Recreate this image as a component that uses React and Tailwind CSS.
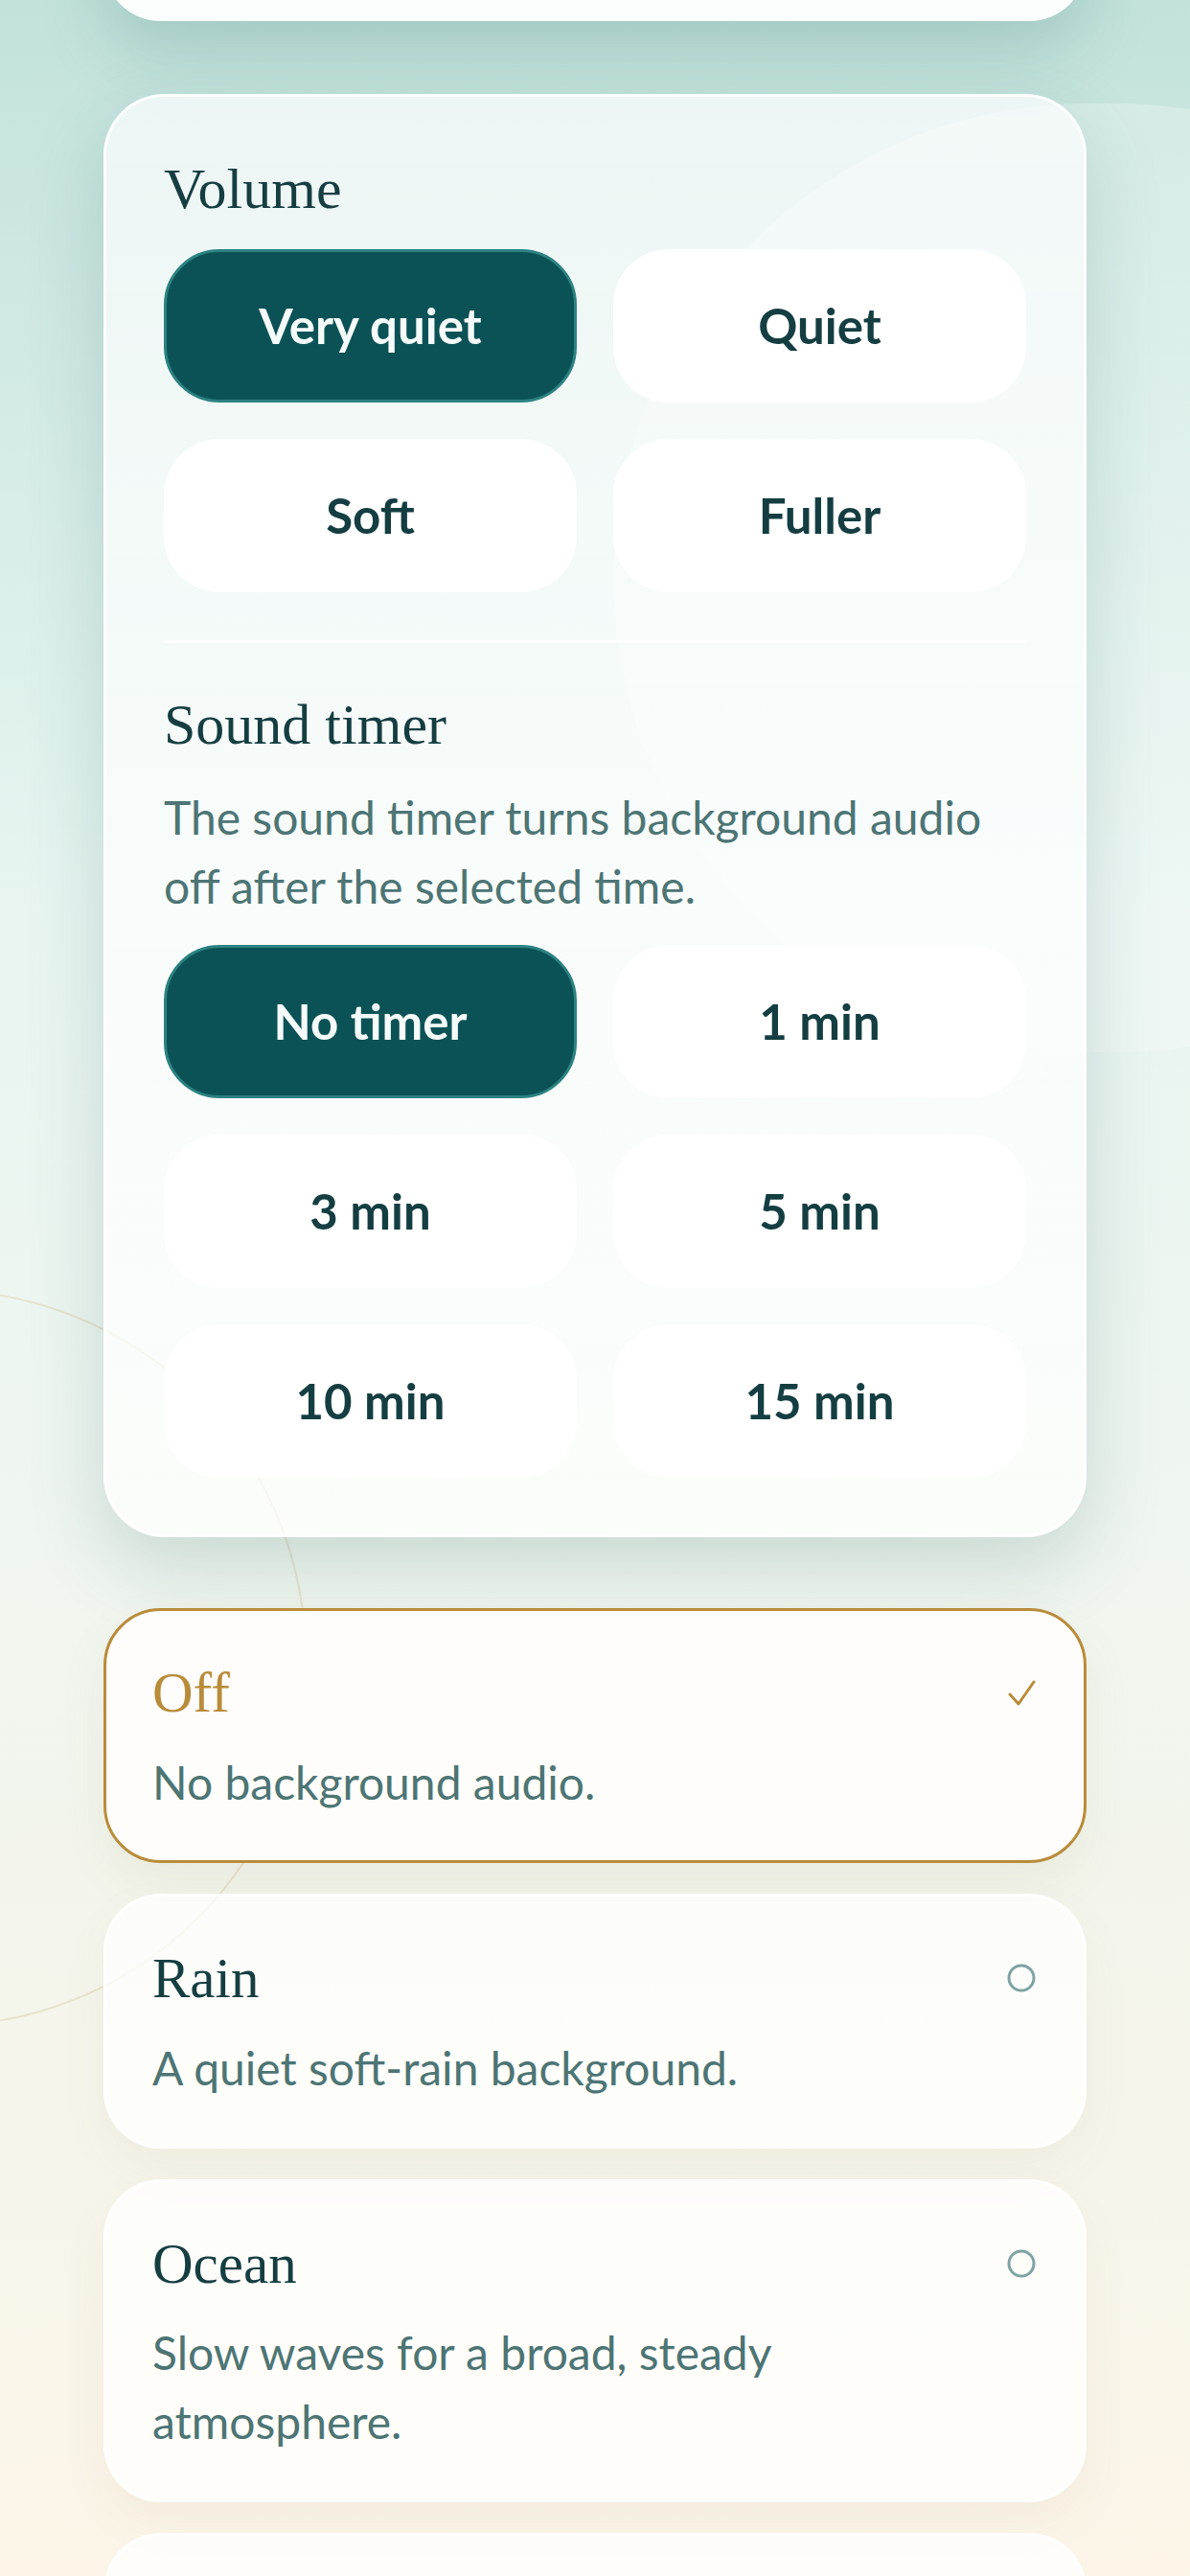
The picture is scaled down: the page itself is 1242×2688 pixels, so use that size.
import React from "react";

const serif = "font-['Liberation_Serif',serif]";
const sans = "font-['Lato','Noto_Sans',sans-serif]";

const volumes = ["Very quiet", "Quiet", "Soft", "Fuller"];
const timers = ["No timer", "1 min", "3 min", "5 min", "10 min", "15 min"];

const sounds = [
  { id: "off", title: "Off", text: "No background audio." },
  { id: "rain", title: "Rain", text: "A quiet soft-rain background." },
  { id: "ocean", title: "Ocean", text: "Slow waves for a broad, steady atmosphere." },
];

const Choice = ({ label, active }) => (
  <button
    className={`h-[160px] rounded-[58px] text-[51px] font-bold ${sans} ${
      active
        ? "bg-[#0b5256] text-[#f4fbf9] border-[3px] border-[#2c8281]"
        : "bg-white text-[#143e41]"
    }`}
  >
    {label}
  </button>
);

const SoundCard = ({ sound, selected }) => (
  <div
    className={`flex items-start gap-[24px] rounded-[60px] pl-[48px] pr-[50px] pt-[50px] pb-[45px] ${
      selected
        ? "bg-[#fefdfb] border-[3px] border-[#b98c3a] shadow-[0_20px_50px_rgba(120,110,70,0.08)]"
        : "bg-white/75 border-[3px] border-white/70 shadow-[0_20px_50px_rgba(120,110,70,0.06)]"
    }`}
  >
    <div className="flex-1">
      <h3
        className={`${serif} text-[59px] leading-[1.2] ${
          selected ? "text-[#b98c3a]" : "text-[#153e41]"
        }`}
      >
        {sound.title}
      </h3>
      <p className={`${sans} mt-[22px] text-[48px] leading-[1.5] text-[#4d7574]`}>
        {sound.text}
      </p>
    </div>
    <div className="flex h-[71px] items-center">
      {selected ? (
        <svg width="30" height="28" viewBox="0 0 30 28" fill="none">
          <path d="M3 15 L12 25 L28 2" stroke="#b98c3a" strokeWidth="3" strokeLinecap="round" strokeLinejoin="round" />
        </svg>
      ) : (
        <svg width="30" height="30" viewBox="0 0 30 30" fill="none">
          <circle cx="15" cy="15" r="13" stroke="#7ea3a2" strokeWidth="3" />
        </svg>
      )}
    </div>
  </div>
);

export default function App() {
  return (
    <div className="relative min-h-[2688px] w-[1242px] overflow-hidden bg-[linear-gradient(180deg,#c3e2dc_0%,#dcefea_22%,#e8f5f1_33%,#eff6f1_52%,#f3f5ec_68%,#f7f5ea_80%,#fef5e7_100%)]">
      {/* background decorations */}
      <div className="absolute left-[640px] top-[108px] h-[990px] w-[1020px] rounded-full bg-white/25" />
      <div className="absolute left-[-470px] top-[1345px] h-[770px] w-[790px] rounded-full border-2 border-[#e3dcc0]/70" />

      <div className="relative flex flex-col px-[108px]">
        {/* previous card, scrolled out */}
        <div className="mt-[-98px] h-[120px] rounded-[64px] bg-[#fcfefd] shadow-[0_30px_70px_rgba(40,110,100,0.22)]" />

        {/* settings card */}
        <div className="mt-[76px] rounded-[64px] border-[3px] border-white/80 bg-[linear-gradient(180deg,rgba(255,255,255,0.68),rgba(255,255,255,0.72))] px-[60px] pt-[60px] pb-[59px] shadow-[0_30px_80px_rgba(40,100,95,0.2)]">
          <h2 className={`${serif} text-[60px] leading-[1.2] text-[#153e41]`}>Volume</h2>
          <div className="mt-[27px] grid grid-cols-2 gap-x-[38px] gap-y-[38px]">
            {volumes.map((v, i) => (
              <Choice key={v} label={v} active={i === 0} />
            ))}
          </div>

          <div className="mt-[50px] h-[3px] bg-white/90" />

          <h2 className={`${serif} mt-[49px] text-[60px] leading-[1.2] text-[#153e41]`}>Sound timer</h2>
          <p className={`${sans} mt-[25px] text-[48px] leading-[1.5] text-[#4d7574]`}>
            The sound timer turns background audio off after the selected time.
          </p>
          <div className="mt-[25px] grid grid-cols-2 gap-x-[38px] gap-y-[38px]">
            {timers.map((t, i) => (
              <Choice key={t} label={t} active={i === 0} />
            ))}
          </div>
        </div>

        {/* sound list */}
        <div className="mt-[74px] flex flex-col gap-[32px] pb-[40px]">
          {sounds.map((s, i) => (
            <SoundCard key={s.id} sound={s} selected={i === 0} />
          ))}
          <div className="h-[200px] rounded-[60px] border-[3px] border-white/70 bg-white/75" />
        </div>
      </div>
    </div>
  );
}
